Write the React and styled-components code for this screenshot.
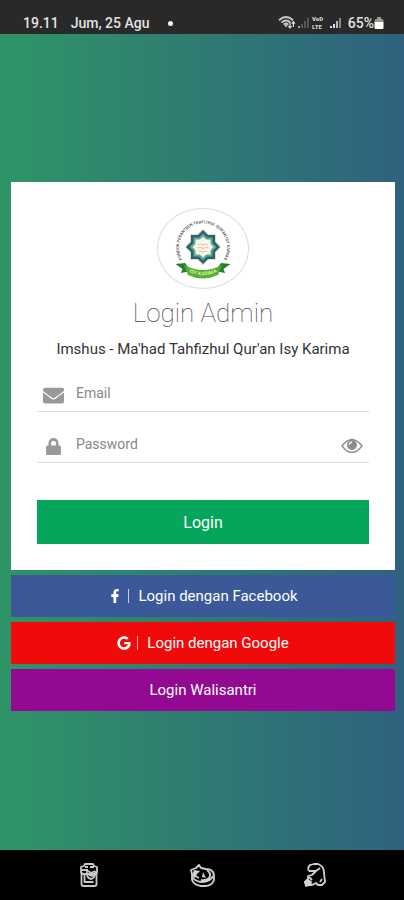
import React, { useState } from 'react';
import styled, { createGlobalStyle } from 'styled-components';
import { FaEnvelope, FaLock, FaFacebookF, FaGoogle } from 'react-icons/fa';

const App = () => {
  const [visible, setVisible] = useState(false);

  return (
    <Screen>
      <GlobalStyle />
      <StatusBar>
        <span>19.11</span>
        <span>Jum, 25 Agu</span>
        <Dot />
        <StatusIcons />
        <span>65%</span>
        <Battery />
      </StatusBar>

      <Main>
        <Card onSubmit={(e) => e.preventDefault()}>
          <Avatar>
            <Logo />
          </Avatar>
          <Title>Login Admin</Title>
          <Subtitle>Imshus - Ma'had Tahfizhul Qur'an Isy Karima</Subtitle>

          <Field>
            <FieldIcon htmlFor='email'><FaEnvelope size={21} /></FieldIcon>
            <Input id='email' type='email' placeholder='Email' aria-label='Email' />
          </Field>
          <Field>
            <FieldIcon htmlFor='password'><FaLock size={17} /></FieldIcon>
            <Input
              id='password'
              type={visible ? 'text' : 'password'}
              placeholder='Password'
              aria-label='Password'
            />
            <EyeButton type='button' aria-label='Lihat password' onClick={() => setVisible(!visible)}>
              <Eye />
            </EyeButton>
          </Field>

          <Submit type='submit'>Login</Submit>
        </Card>

        <LoginButton type='button' $color='#3b5998'>
          <IconSlot $width={16}><FaFacebookF size={14} /></IconSlot>
          <Divider />
          Login dengan Facebook
        </LoginButton>
        <LoginButton type='button' $color='#f10a0a'>
          <IconSlot $width={16}><FaGoogle size={14} /></IconSlot>
          <Divider />
          Login dengan Google
        </LoginButton>
        <LoginButton type='button' $color='#930992'>Login Walisantri</LoginButton>
      </Main>

      <NavBar>
        <NavButton type='button' aria-label='Recent apps'><RecentIcon /></NavButton>
        <NavButton type='button' aria-label='Home'><HomeIcon /></NavButton>
        <NavButton type='button' aria-label='Back'><BackIcon /></NavButton>
      </NavBar>
    </Screen>
  );
};

export default App;

const StatusIcons = () => (
  <StatusSvg width='64' height='16' viewBox='0 0 64 16' aria-hidden='true'>
    <g fill='none' stroke='#c9c9c9' strokeWidth='1.9'>
      <path d='M1 5.2Q8 -1 15 5.2' />
      <path d='M3.5 7.6Q8 3.6 12.5 7.6' />
      <path d='M5.7 9.6Q8 7.6 10.3 9.6' />
    </g>
    <path d='M6 9.5l2 3 2-3z' fill='#c9c9c9' />
    <path d='M12 7.5v5M10.4 11l1.6 2 1.6-2M15.4 12V7M13.8 8.6l1.6-2 1.6 2' fill='none' stroke='#ddd' strokeWidth='1.2' />
    <path d='M20 11h2v2h-2z' fill='#aaa' />
    <path d='M23 9h2v4h-2zM26 6h2v7h-2zM29 3h2v10h-2z' fill='#555' />
    <text x='34' y='6' fontFamily='Roboto, sans-serif' fontSize='6' fontWeight='900' fill='#d5d5d5'>VoD</text>
    <text x='34' y='14' fontFamily='Roboto, sans-serif' fontSize='6' fontWeight='900' fill='#d5d5d5'>LTE</text>
    <path d='M52 11h2v2h-2zM55 9h2v4h-2z' fill='#ddd' />
    <path d='M58 6h2v7h-2z' fill='#bbb' />
    <path d='M61 3h2v10h-2z' fill='#888' />
  </StatusSvg>
);

const Battery = () => (
  <svg width='10' height='14' viewBox='0 0 10 14' aria-hidden='true'>
    <path d='M3 1h4v2h1.4L9.5 4.5V6h-9V4.5L1.6 3H3z' fill='#999' />
    <path d='M.5 6h9v6q0 1-1 1h-7q-1 0-1-1z' fill='#fff' />
  </svg>
);

const Logo = () => (
  <svg width='60' height='60' viewBox='0 0 60 60' aria-label='Isy Karima' role='img'>
    <defs>
      <path id='ring' d='M11 43A24 24 0 1 1 49 43' />
      <path id='banner' d='M17 52Q30 58 43 52' />
    </defs>
    <text fontFamily='Roboto, sans-serif' fontSize='4' fontWeight='500' fill='#444'>
      <textPath href='#ring' startOffset='50%' textAnchor='middle'>
        PONDOK PESANTREN TAHFIZHUL QUR'AN ISY KARIMA
      </textPath>
    </text>
    <g fill='#f0d9bd'>
      <path d='M17 15h26v26H17z' />
      <path d='M17 15h26v26H17z' transform='rotate(45 30 28)' />
    </g>
    <g fill='#23647c'>
      <path d='M18 16h24v24H18z' />
      <path d='M18 16h24v24H18z' transform='rotate(45 30 28)' />
    </g>
    <g fill='#67a886'>
      <path d='M20.5 18.5h19v19h-19z' />
      <path d='M20.5 18.5h19v19h-19z' transform='rotate(45 30 28)' />
    </g>
    <g fill='#f4f7e9'>
      <path d='M22.5 20.5h15v15h-15z' />
      <path d='M22.5 20.5h15v15h-15z' transform='rotate(45 30 28)' />
    </g>
    <path d='M25 26q2.500-2 5 0 2.500-2 5 0M24.500 29q3-1.500 5.500.5 2.500-2 5.500-.5M26 32q4 1.500 8 0' fill='none' stroke='#e0aa9c' strokeWidth='.8' />
    <path d='M2.500 45L12 44l6 8-10 2 1.500-4zM57.500 45L48 44l-6 8 10 2-1.500-4z' fill='#257d32' />
    <path d='M11 46Q30 56 49 46L45 56Q30 63 15 56z' fill='#55ae35' />
    <text fontFamily='Roboto, sans-serif' fontSize='5' fontWeight='700' fill='#d8ef9a'>
      <textPath href='#banner' startOffset='50%' textAnchor='middle' dominantBaseline='middle'>ISY KARIMA</textPath>
    </text>
  </svg>
);

const Eye = () => (
  <svg width='22' height='16' viewBox='0 0 22 16' aria-hidden='true'>
    <path d='M1 8Q11-5 21 8 11 21 1 8z' fill='none' stroke='#8d8d8d' strokeWidth='1.3' />
    <circle cx='11' cy='7' r='5' fill='#8d8d8d' />
    <path d='M8.2 6.8Q8.4 4.3 11 4.1' fill='none' stroke='#fff' strokeWidth='1.1' />
  </svg>
);

// cartoon navigation icons of the phone theme
const RecentIcon = () => (
  <svg width='24' height='26' viewBox='0 0 24 26' fill='none' stroke='#c8c8c8' strokeWidth='1.8' strokeLinejoin='round'>
    <path d='M4 5l3-1 1-2h8l1 2 3 1v5l-1 2H5L4 10z' />
    <path d='M4.500 10v12q0 2 2 2h11q2 0 2-2V10' />
    <path d='M7.500 12v8h9M8 5h3M13 5h4M5 8h6' />
    <path d='M10 8q-1 8 4 9 5-1 4-8M11 9l3 2 4-2M12 13l3 1 2-2' />
  </svg>
);

const HomeIcon = () => (
  <svg width='26' height='26' viewBox='0 0 26 26' fill='none' stroke='#d0d0d0' strokeWidth='1.8' strokeLinejoin='round'>
    <path d='M3 12L2 8l5-2 3-3 2 3 5 1q7 0 8 6v5q-2 6-9 6h-4q-7-1-9-6v-3z' />
    <path d='M3 15q4 5 10 5 8 0 11-6M5 12q2 3 5 4M18 8q5 4 2 8-3 3-8 2' />
    <path d='M5 8l6 1-3 3-2 4-3-2z' fill='#d0d0d0' stroke='none' />
    <path d='M14 10l3 6-4-1z' fill='#d0d0d0' stroke='none' />
  </svg>
);

const BackIcon = () => (
  <svg width='24' height='26' viewBox='0 0 24 26' fill='none' stroke='#d0d0d0' strokeWidth='1.8' strokeLinejoin='round'>
    <path d='M6 9Q4 6 7 3l4-1h4q6 2 6 9l1 9-3 3h-4l-2-2-4 2H4l-2-3 3-3V14l4-1 4-4-7 0' />
    <path d='M13 9l4-3M6 15l3 3M5 18l3 4M17 20l2-3' />
    <path d='M2 20l3-2 3 2-1 3-4 1z' fill='#d0d0d0' />
  </svg>
);

const GlobalStyle = createGlobalStyle`
  * {
    box-sizing: border-box;
  }

  body {
    margin: 0;
    font-family: Roboto, 'Liberation Sans', sans-serif;
  }

  button,
  input {
    font-family: inherit;
  }
`;

const Screen = styled.div`
  display: flex;
  flex-direction: column;
  min-height: 100vh;
  background: linear-gradient(to right, #2e9567, #2f617e);
`;

const StatusBar = styled.header`
  display: flex;
  align-items: center;
  height: 34px;
  padding: 12px 20px 0 23px;
  background: #292929;
  color: #e2e2e2;
  font-size: 14px;
  line-height: 22px;
  font-weight: 500;

  span + span {
    margin-left: 12px;
  }
`;

const Dot = styled.i`
  width: 5px;
  height: 5px;
  margin-left: 18px;
  border-radius: 50%;
  background: #f5f5f5;
`;

const StatusSvg = styled.svg`
  margin: 0 6px 0 auto;
`;

const Main = styled.main`
  flex: 1;
  display: flex;
  flex-direction: column;
  justify-content: center;
  gap: 5px;
  padding: 9px 9px 0 11px;
`;

const Card = styled.form`
  display: flex;
  flex-direction: column;
  padding: 26px;
  background: #fff;
`;

const Avatar = styled.div`
  display: flex;
  align-items: center;
  justify-content: center;
  align-self: center;
  width: 92px;
  height: 81px;
  border: 1px solid #ddd;
  border-radius: 50%;
`;

const Title = styled.h1`
  margin: 8px 0 0;
  color: #444;
  font-size: 26px;
  line-height: 32px;
  font-weight: 100;
  text-align: center;
`;

const Subtitle = styled.p`
  margin: 8px 0 18px;
  color: #333;
  font-size: 15px;
  line-height: 24px;
  text-align: center;
  white-space: nowrap;
`;

const Field = styled.div`
  display: flex;
  align-items: center;
  height: 33px;
  margin-bottom: 18px;
  border-bottom: 1px solid #ddd;
`;

const FieldIcon = styled.label`
  display: flex;
  justify-content: center;
  width: 32px;
  color: #999;
`;

const Input = styled.input`
  flex: 1;
  min-width: 0;
  height: 28px;
  margin-bottom: 4px;
  padding: 0 7px;
  border: 0;
  outline: 0;
  background: transparent;
  color: #555;
  font-size: 14px;

  &::placeholder {
    color: #888;
    opacity: 1;
  }
`;

const EyeButton = styled.button`
  display: flex;
  padding: 0 6px;
  border: 0;
  background: none;
  cursor: pointer;
`;

const Submit = styled.button`
  height: 44px;
  margin-top: 19px;
  border: 0;
  background: #04a65b;
  color: #fff;
  font-size: 16px;
  cursor: pointer;
`;

const LoginButton = styled.button`
  display: flex;
  align-items: center;
  justify-content: center;
  height: 42px;
  padding: 0;
  border: 0;
  background: ${(props) => props.$color};
  color: #fff;
  font-size: 15px;
  cursor: pointer;
`;

const IconSlot = styled.span`
  display: flex;
  width: ${(props) => props.$width}px;
`;

const Divider = styled.span`
  width: 1px;
  height: 14px;
  margin: 0 9px 0 4px;
  background: rgba(255, 255, 255, 0.7);
`;

const NavBar = styled.nav`
  display: flex;
  justify-content: center;
  gap: 14%;
  height: 50px;
  background: #000;
`;

const NavButton = styled.button`
  display: flex;
  align-items: center;
  justify-content: center;
  width: 56px;
  padding: 0;
  border: 0;
  background: none;
`;
